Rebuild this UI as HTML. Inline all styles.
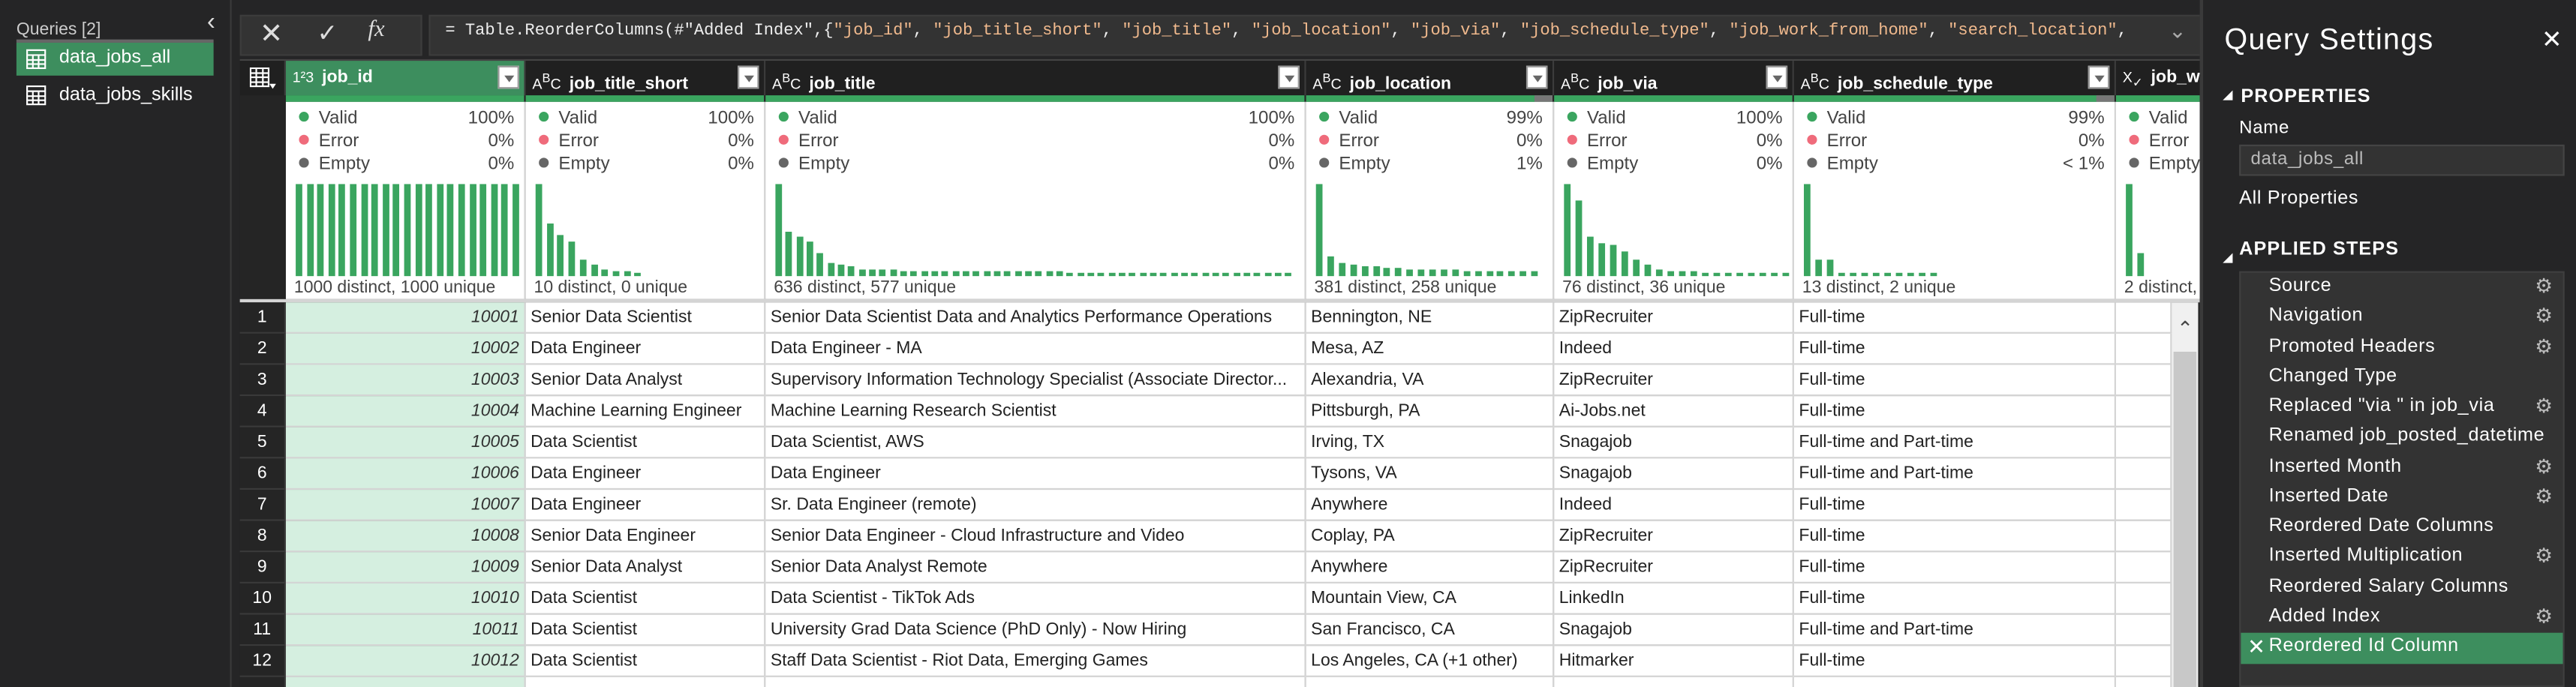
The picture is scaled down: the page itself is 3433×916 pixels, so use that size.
<!DOCTYPE html>
<html><head><meta charset="utf-8"><style>
*{margin:0;padding:0;box-sizing:border-box}
html,body{width:3433px;height:916px;overflow:hidden;background:#252526}
#s{position:absolute;left:0;top:0;width:1568px;height:418px;transform:scale(2.18942,2.19139);transform-origin:0 0;font-family:"Liberation Sans",sans-serif;background:#252526;overflow:hidden}
.a{position:absolute;white-space:nowrap}
.hd{position:absolute;top:37px;height:21px;background:#202020;color:#fff;font-size:10.5px;font-weight:bold;line-height:21px;border-right:1px solid #3c3c3c;overflow:hidden}
.dd{position:absolute;right:3px;top:3px;width:13px;height:14px;background:#fff;border:1px solid #999}
.dd:after{content:"";position:absolute;left:3px;top:5px;border-left:3px solid transparent;border-right:3px solid transparent;border-top:4px solid #666}
.ty{font-size:9px;font-weight:normal;margin:0 5px 0 4px}
.pr{position:absolute;top:62px;height:120px;background:#fff;border-right:1px solid #d4d4d4;font-size:11px;color:#444}
.st{position:absolute;left:8px;right:6px;height:14px;line-height:14px}
.st i{display:inline-block;width:6px;height:6px;border-radius:50%;margin-right:6px;vertical-align:1px}
.st b{position:absolute;right:0;font-weight:normal}
.ds{position:absolute;left:5px;top:107px;font-size:10.5px;color:#444}
.cell{position:absolute;height:19px;line-height:18px;font-size:10.5px;color:#222;border-right:1px solid #d4d4d4;border-bottom:1px solid #d4d4d4;background:#fff;padding-left:3px;overflow:hidden}
.stp{position:absolute;left:1381px;font-size:11.5px;color:#fff;letter-spacing:.3px}
.gear{position:absolute;left:1543px;font-size:12px;color:#bbb}
</style></head><body><div id="s">
<div class="a" style="left:0;top:0;width:141px;height:418px;background:#252526;border-right:1px solid #3a3a3a"></div>
<div class="a" style="left:10px;top:12px;font-size:10.5px;color:#ccc">Queries [2]</div>
<div class="a" style="left:126px;top:5px;font-size:15px;color:#ddd">&#8249;</div>
<div class="a" style="left:10px;top:24px;width:120px;height:2px;background:#666"></div>
<div class="a" style="left:10px;top:26px;width:120px;height:20px;background:#3d8e5e"></div>
<svg class="a" style="left:15px;top:29px" width="14" height="14"><g fill="none" stroke="#fff" stroke-width="1"><rect x="1.5" y="1.5" width="11" height="11"/><path d="M1.5 4.5h11M1.5 7.5h11M1.5 10h11M5 4.5v8M8.5 4.5v8"/></g></svg>
<div class="a" style="left:36px;top:29px;font-size:11.5px;color:#fff">data_jobs_all</div>
<svg class="a" style="left:15px;top:51px" width="14" height="14"><g fill="none" stroke="#fff" stroke-width="1"><rect x="1.5" y="1.5" width="11" height="11"/><path d="M1.5 4.5h11M1.5 7.5h11M1.5 10h11M5 4.5v8M8.5 4.5v8"/></g></svg>
<div class="a" style="left:36px;top:52px;font-size:11.5px;color:#fff">data_jobs_skills</div>
<div class="a" style="left:146px;top:9px;width:111px;height:25px;background:#333;border:1px solid #3c3c3c"></div>
<div class="a" style="left:158px;top:11px;font-size:17px;color:#ddd">&#10005;</div>
<div class="a" style="left:193px;top:11px;font-size:15px;color:#ddd">&#10003;</div>
<div class="a" style="left:224px;top:11px;font-size:14px;color:#ddd;font-family:'Liberation Serif',serif;font-style:italic">fx</div>
<div class="a" style="left:261px;top:9px;width:1079px;height:25px;background:#333;border:1px solid #3c3c3c"></div>
<div class="a" style="left:271px;top:14px;font-family:'Liberation Mono',monospace;font-size:10.1px;color:#eee">= Table.ReorderColumns(#"Added Index",{<span style="color:#f0b98d">"job_id"</span>, <span style="color:#f0b98d">"job_title_short"</span>, <span style="color:#f0b98d">"job_title"</span>, <span style="color:#f0b98d">"job_location"</span>, <span style="color:#f0b98d">"job_via"</span>, <span style="color:#f0b98d">"job_schedule_type"</span>, <span style="color:#f0b98d">"job_work_from_home"</span>, <span style="color:#f0b98d">"search_location"</span>,</div>
<div class="a" style="left:1320px;top:11px;font-size:13px;color:#aaa">&#8964;</div>
<div class="a" style="left:146px;top:36px;width:1193px;height:382px;background:#252525;border-top:1px solid #444"></div>
<div class="hd" style="left:146px;width:28px"><svg style="position:absolute;left:6px;top:4px" width="16" height="14"><g fill="none" stroke="#fff" stroke-width="1"><rect x="0.5" y="0.5" width="11" height="11"/><path d="M0.5 3.5h11M0.5 6h11M0.5 9h11M4 0.5v11M8 0.5v11"/></g><path d="M12 10l2 3 2-3z" fill="#fff"/></svg></div>
<div id="cols"></div>
<div id="rows"></div>
<div class="a" style="left:1322px;top:184px;width:16px;height:234px;background:#f0f0f0"></div>
<div class="a" style="left:1323px;top:214px;width:14px;height:204px;background:#c8c8c8"></div>
<div class="a" style="left:1325px;top:193px;font-size:12px;color:#444">&#8963;</div>
<div class="a" style="left:1339px;top:0;width:229px;height:418px;background:#252526;border-left:2px solid #3a3a3a"></div>
<div class="a" style="left:1354px;top:14px;font-size:18px;color:#fff;letter-spacing:.6px">Query Settings</div>
<div class="a" style="left:1547px;top:15px;font-size:15px;color:#fff">&#10005;</div>
<div class="a" style="left:1353px;top:55px;border-left:6px solid transparent;border-bottom:6px solid #fff"></div>
<div class="a" style="left:1364px;top:53px;font-size:11.5px;font-weight:bold;color:#fff;letter-spacing:.5px">PROPERTIES</div>
<div class="a" style="left:1363px;top:72px;font-size:11px;color:#fff;letter-spacing:.3px">Name</div>
<div class="a" style="left:1363px;top:88px;width:198px;height:19px;background:#333;border:1px solid #444"></div>
<div class="a" style="left:1370px;top:91px;font-size:11px;color:#bbb;letter-spacing:.3px">data_jobs_all</div>
<div class="a" style="left:1363px;top:115px;font-size:11.5px;color:#fff;letter-spacing:.3px">All Properties</div>
<div class="a" style="left:1353px;top:154px;border-left:6px solid transparent;border-bottom:6px solid #fff"></div>
<div class="a" style="left:1363px;top:146px;font-size:11.5px;font-weight:bold;color:#fff;letter-spacing:.5px">APPLIED STEPS</div>
<div class="a" style="left:1363px;top:165px;width:198px;height:253px;background:#333;border:1px solid #3f3f3f"></div>
<div class="a" style="left:1364px;top:385px;width:196px;height:19px;background:#3d8e5e"></div>
<div class="a" style="left:1368px;top:386px;font-size:13px;color:#fff">&#10005;</div>
<div id="steps"></div>
</div>
<script>
var G='#3aa55f';
var cols=[
 {x:174,w:146,n:'job_id',t:'1²3',sel:1,v:'100%',e:'0%',m:'0%',d:'1000 distinct, 1000 unique',h:Array(21).fill(1),st:6.6,bw:4},
 {x:320,w:146,n:'job_title_short',t:'A<sup>B</sup>C',v:'100%',e:'0%',m:'0%',d:'10 distinct, 0 unique',h:[1,.58,.45,.38,.17,.13,.08,.06,.05,.02],st:6.7,bw:4},
 {x:466,w:329,n:'job_title',t:'A<sup>B</sup>C',v:'100%',e:'0%',m:'0%',d:'636 distinct, 577 unique',h:[1,.48,.42,.37,.25,.15,.12,.11,.08,.08,.07,.07].concat(Array(16).fill(.06),Array(22).fill(.04)),st:6.33,bw:4},
 {x:795,w:151,n:'job_location',t:'A<sup>B</sup>C',v:'99%',e:'0%',m:'1%',d:'381 distinct, 258 unique',h:[1,.21,.14,.12,.11,.1,.09,.09,.08,.08,.07,.07,.07,.06,.06,.06,.06,.06,.06,.06],gray:1,st:6.9,bw:4},
 {x:946,w:146,n:'job_via',t:'A<sup>B</sup>C',v:'100%',e:'0%',m:'0%',d:'76 distinct, 36 unique',h:[1,.83,.42,.36,.34,.26,.18,.13,.07,.06,.05,.05,.04,.04,.04,.04,.03,.03,.03,.03],st:7,bw:4},
 {x:1092,w:196,n:'job_schedule_type',t:'A<sup>B</sup>C',v:'99%',e:'0%',m:'&lt; 1%',d:'13 distinct, 2 unique',h:[1,.18,.17,.04,.03,.03,.03,.03,.03,.03,.03,.03],gray:1,st:7,bw:4},
 {x:1288,w:60,n:'job_w',t:'X<sub>✓</sub>',v:'',e:'',m:'',d:'2 distinct, 0 unique',h:[1,.25],st:7,bw:4}
];
var o='';
cols.forEach(function(c){
 o+='<div class="hd" style="left:'+c.x+'px;width:'+c.w+'px;'+(c.sel?'background:#3d8e5e;':'')+'"><span class="ty">'+c.t+'</span>'+c.n+(c.x<1288?'<span class="dd"></span>':'')+'</div>';
 o+='<div class="a" style="left:'+c.x+'px;top:58px;width:'+(c.w-1)+'px;height:4px;background:'+G+'"></div>';
 if(c.gray)o+='<div class="a" style="left:'+(c.x+c.w-12)+'px;top:58px;width:11px;height:4px;background:#777"></div>';
 o+='<div class="pr" style="left:'+c.x+'px;width:'+c.w+'px">';
 o+='<div class="st" style="top:3px"><i style="background:'+G+'"></i>Valid<b>'+c.v+'</b></div>';
 o+='<div class="st" style="top:17px"><i style="background:#ef6b7b"></i>Error<b>'+c.e+'</b></div>';
 o+='<div class="st" style="top:31px"><i style="background:#666"></i>Empty<b>'+c.m+'</b></div>';
 c.h.forEach(function(h,i){var hh=Math.max(2,Math.round(56*h));o+='<div class="a" style="left:'+(6+i*c.st).toFixed(1)+'px;top:'+(106-hh)+'px;width:'+c.bw+'px;height:'+hh+'px;background:'+G+'"></div>';});
 o+='<div class="ds">'+c.d+'</div></div>';
});
o+='<div class="a" style="left:146px;top:182px;width:1193px;height:2px;background:#d4d4d4"></div>';
document.getElementById('cols').innerHTML=o;
var R=[
['Senior Data Scientist','Senior Data Scientist Data and Analytics Performance Operations','Bennington, NE','ZipRecruiter','Full-time'],
['Data Engineer','Data Engineer - MA','Mesa, AZ','Indeed','Full-time'],
['Senior Data Analyst','Supervisory Information Technology Specialist (Associate Director...','Alexandria, VA','ZipRecruiter','Full-time'],
['Machine Learning Engineer','Machine Learning Research Scientist','Pittsburgh, PA','Ai-Jobs.net','Full-time'],
['Data Scientist','Data Scientist, AWS','Irving, TX','Snagajob','Full-time and Part-time'],
['Data Engineer','Data Engineer','Tysons, VA','Snagajob','Full-time and Part-time'],
['Data Engineer','Sr. Data Engineer (remote)','Anywhere','Indeed','Full-time'],
['Senior Data Engineer','Senior Data Engineer - Cloud Infrastructure and Video','Coplay, PA','ZipRecruiter','Full-time'],
['Senior Data Analyst','Senior Data Analyst Remote','Anywhere','ZipRecruiter','Full-time'],
['Data Scientist','Data Scientist - TikTok Ads','Mountain View, CA','LinkedIn','Full-time'],
['Data Scientist','University Grad Data Science (PhD Only) - Now Hiring','San Francisco, CA','Snagajob','Full-time and Part-time'],
['Data Scientist','Staff Data Scientist - Riot Data, Emerging Games','Los Angeles, CA (+1 other)','Hitmarker','Full-time'],
['','','','','']];
o='';
R.forEach(function(r,i){var y=184+i*19;
 o+='<div class="cell" style="left:146px;top:'+y+'px;width:28px;background:#252525;color:#fff;border-color:#3a3a3a;text-align:center;padding:0">'+(i<12?i+1:'')+'</div>';
 o+='<div class="cell" style="left:174px;top:'+y+'px;width:146px;background:#d5efe0;text-align:right;padding-right:3px;font-style:italic;color:#333">'+(i<12?10001+i:'')+'</div>';
 var xs=[320,466,795,946,1092,1288],ws=[146,329,151,146,196,34];
 for(var k=0;k<6;k++)o+='<div class="cell" style="left:'+xs[k]+'px;top:'+y+'px;width:'+ws[k]+'px">'+(r[k]||'')+'</div>';
});
document.getElementById('rows').innerHTML=o;
var S=[['Source',1],['Navigation',1],['Promoted Headers',1],['Changed Type',0],['Replaced "via " in job_via',1],['Renamed job_posted_datetime',0],['Inserted Month',1],['Inserted Date',1],['Reordered Date Columns',0],['Inserted Multiplication',1],['Reordered Salary Columns',0],['Added Index',1],['Reordered Id Column',0]];
o='';
S.forEach(function(s,i){var y=168+i*18.25;o+='<div class="stp" style="top:'+y+'px">'+s[0]+'</div>';if(s[1])o+='<div class="gear" style="top:'+(y-1)+'px">&#9881;</div>';});
document.getElementById('steps').innerHTML=o;
</script>
</body></html>
